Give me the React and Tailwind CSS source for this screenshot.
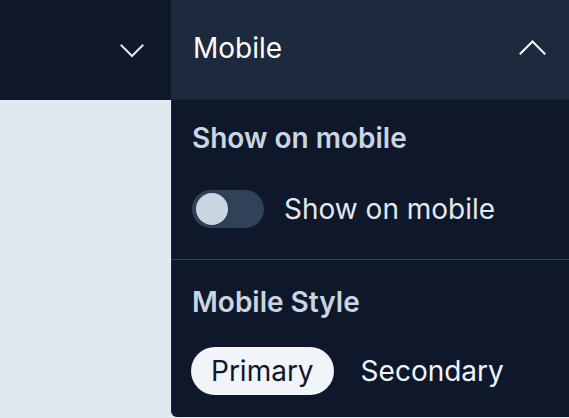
import React, { useState } from 'react';

function ChevronDown() {
  return (
    <svg width="24" height="14" viewBox="0 0 24 14" fill="none" stroke="#e2e8f0" strokeWidth="2" strokeLinecap="square">
      <path d="M1.5 1.5 L12 12 L22.5 1.5" />
    </svg>
  );
}

function ChevronUp() {
  return (
    <svg width="27" height="15" viewBox="0 0 27 15" fill="none" stroke="#f8fafc" strokeWidth="2" strokeLinecap="square">
      <path d="M1.5 13.5 L13.5 1.5 L25.5 13.5" />
    </svg>
  );
}

function Toggle({ on, onChange }) {
  return (
    <button
      onClick={() => onChange(!on)}
      className="w-[72px] h-[38px] rounded-full bg-slate-700 pl-[4px] pr-[4px] flex items-center shrink-0"
    >
      <span className={`w-[32px] h-[32px] rounded-full bg-slate-300 shadow ${on ? 'ml-auto' : ''}`} />
    </button>
  );
}

export default function App() {
  const [showMobile, setShowMobile] = useState(false);
  const [style, setStyle] = useState('Primary');

  return (
    <div className="relative w-[569px] h-[418px] overflow-hidden bg-slate-200 font-['Inter',sans-serif]">
      <div className="h-[100px] bg-[#0f172a] flex">
        <button className="w-[171px] h-full flex items-center justify-end pr-[27px] pt-[2px]">
          <ChevronDown />
        </button>
      </div>

      <div className="absolute left-[171px] top-0 right-0 h-[417px] bg-[#0f172a] border-l border-slate-800 rounded-bl-md">
        <div className="h-[100px] bg-slate-800 border-b border-[#19212f] flex items-center justify-between pl-[21px] pr-[23px]">
          <span className="text-[28px] leading-9 text-white -mt-[4px]">Mobile</span>
          <span className="-mt-[4px]">
            <ChevronUp />
          </span>
        </div>

        <div className="px-5 pt-[20px] pb-[31px] border-b border-slate-700">
          <h3 className="text-[28px] leading-9 font-semibold text-slate-300">Show on mobile</h3>
          <div className="mt-[34px] flex items-center gap-[20px]">
            <Toggle on={showMobile} onChange={setShowMobile} />
            <span className="text-[28px] leading-9 text-slate-200">Show on mobile</span>
          </div>
        </div>

        <div className="pl-[19px] pr-5 pt-[24px]">
          <h3 className="pl-px text-[28px] leading-9 font-semibold text-slate-300">Mobile Style</h3>
          <div className="mt-[27px] flex items-center gap-[7px]">
            {['Primary', 'Secondary'].map((s) => (
              <button
                key={s}
                onClick={() => setStyle(s)}
                className={`h-[48px] px-[20px] rounded-full text-[28px] leading-9 ${
                  style === s ? 'bg-slate-100 text-[#0f172a]' : 'text-slate-100'
                }`}
              >
                {s}
              </button>
            ))}
          </div>
        </div>
      </div>
    </div>
  );
}
